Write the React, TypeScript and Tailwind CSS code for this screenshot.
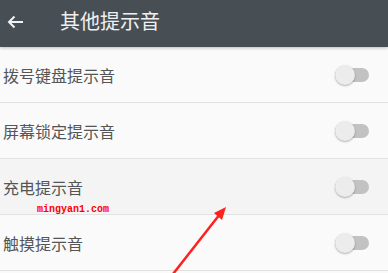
import React from 'react';

const items = [
  { label: '拨号键盘提示音', pressed: false },
  { label: '屏幕锁定提示音', pressed: false },
  { label: '充电提示音', pressed: true },
  { label: '触摸提示音', pressed: false },
];

const Toggle = () => (
  <div className="relative w-[34px] h-[20px] flex items-center">
    <div className="w-[34px] h-[14px] rounded-full bg-[#c2c2c2]" />
    <div className="absolute left-0 top-0 w-[20px] h-[20px] rounded-full bg-[#ececec] shadow-[0_1px_2px_rgba(0,0,0,0.3)]" />
  </div>
);

export default function App() {
  return (
    <div
      className="relative w-[388px] h-[273px] overflow-hidden bg-[#fafafa]"
      style={{ fontFamily: '"Noto Sans CJK SC", "Noto Sans", sans-serif' }}
    >
      <header className="relative z-10 h-[47px] bg-[#474f54] flex items-center shadow-[0_1px_3px_rgba(0,0,0,0.25)]">
        <svg className="ml-[7px] mt-[-4px]" width="17" height="14" viewBox="0 0 17 14" fill="none">
          <path d="M16 7H2M7.5 1.5 2 7l5.5 5.5" stroke="#f2f2f2" strokeWidth="2" />
        </svg>
        <h1 className="ml-[36px] mt-[-5px] text-[20px] text-[#f0f0f0] leading-none">其他提示音</h1>
      </header>
      <ul>
        {items.map((it) => (
          <li
            key={it.label}
            className={`h-[56px] flex items-center justify-between pl-[3px] pr-[19px] border-b border-[#e2e2e2] ${
              it.pressed ? 'bg-[#f4f4f4]' : 'bg-[#fafafa]'
            }`}
          >
            <span className="text-[16px] text-[#555555]">{it.label}</span>
            <Toggle />
          </li>
        ))}
      </ul>
      <span
        className="absolute left-[37px] top-[205px] text-[10px] font-bold text-[#ff0000] leading-none"
        style={{ fontFamily: '"Liberation Mono", monospace' }}
      >
        mingyan1.com
      </span>
      <svg className="absolute left-0 top-0" width="388" height="273">
        <path d="M173 274 L220 214" stroke="#ff2020" strokeWidth="2.5" />
        <polygon points="226,207 222,220 214,213" fill="#ff2020" />
      </svg>
    </div>
  );
}
